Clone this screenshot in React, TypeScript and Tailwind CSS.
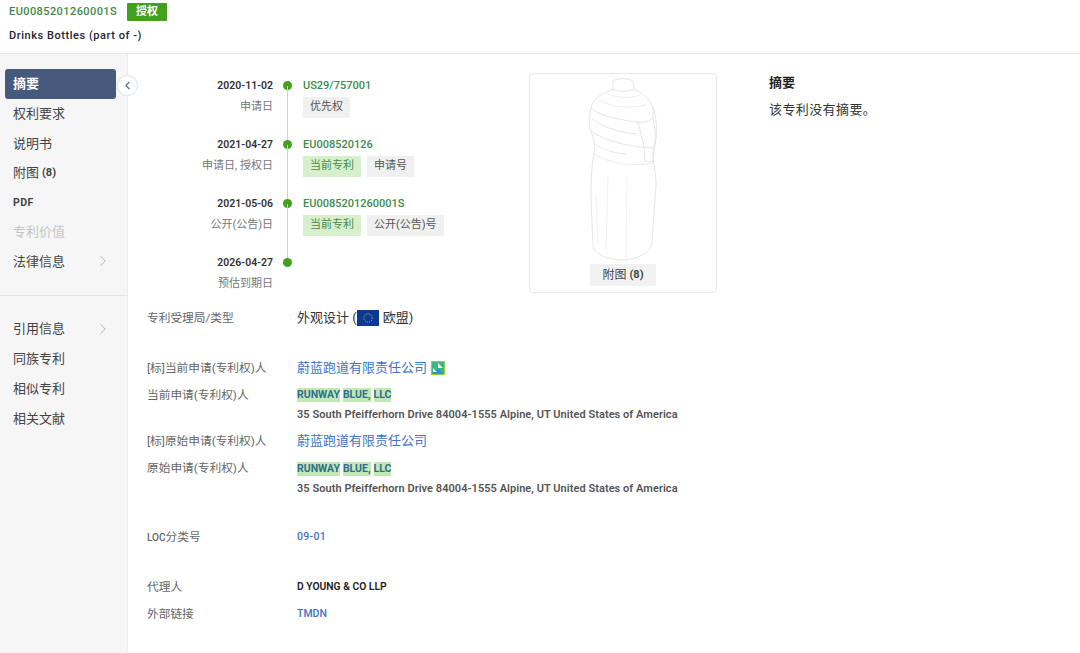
import type { ReactNode } from 'react'
import { ChevronLeft, ChevronRight } from 'lucide-react'

const navTop = ['权利要求', '说明书']
const navBottom = ['同族专利', '相似专利', '相关文献']

const timeline = [
  { date: '2020-11-02', label: '申请日', code: 'US29/757001', tags: [{ text: '优先权', cur: false }] },
  { date: '2021-04-27', label: '申请日, 授权日', code: 'EU008520126', tags: [{ text: '当前专利', cur: true }, { text: '申请号', cur: false }] },
  { date: '2021-05-06', label: '公开(公告)日', code: 'EU0085201260001S', tags: [{ text: '当前专利', cur: true }, { text: '公开(公告)号', cur: false }] },
  { date: '2026-04-27', label: '预估到期日', code: '', tags: [] },
]

function Bottle() {
  return (
    <svg width="90" height="190" viewBox="0 0 90 190" fill="none" stroke="#dedede" strokeWidth="0.8" className="ml-[4px] shrink-0">
      <path d="M33 6c5-3 15-3 20 0l1 8c-6 3-16 3-21 0z" />
      <path d="M34 14C21 18 13 24 11 33c8 7 22 11 47 14 7 1 12-1 15-5l0-9C70 24 62 17 54 14" />
      <path d="M18 24c10 8 30 10 48 6M26 18c8 5 24 6 34 2" stroke="#e8e8e8" />
      <path d="M11 33C9 42 9 50 11 56c3 9 5 13 3 23-3 16-3 31-3 46l2 45c1 8 9 13 27 15 18 0 30-7 32-17l4-58c0-15-4-25-3-35l3-13c1-12 0-22-3-29" />
      <path d="M11 56c14 10 34 15 62 17M12 44c14 10 30 14 46 15" />
      <path d="M14 79c16 10 40 13 59 9M13 68c12 8 22 10 33 11" stroke="#e6e6e6" />
      <path d="M58 47l6 24 1 15 8 1 3-25-3-20" />
      <path d="M28 100l-2 78M47 102l-1 82M16 120l2 48" stroke="#eeeeee" />
    </svg>
  )
}

function EuFlag() {
  return (
    <svg width="22" height="16" viewBox="0 0 22 16" className="mr-[4px]">
      <rect width="22" height="16" fill="#0b3a94" />
      <circle cx="11" cy="8" r="4.2" fill="none" stroke="#c9c44a" strokeWidth="1" strokeDasharray="1 1.2" />
    </svg>
  )
}

function Highlighted() {
  return (
    <div className="mt-px flex gap-[3px] text-[10.5px] font-bold leading-[14px] text-[#2f6f8f]">
      <span className="bg-[#c2e8b6]">RUNWAY</span>
      <span className="bg-[#c2e8b6]">BLUE,</span>
      <span className="bg-[#c2e8b6]">LLC</span>
    </div>
  )
}

function Address() {
  return <div className="mt-[6px] text-[11px] font-semibold leading-[14px] tracking-[0.05px] text-[#555]">35 South Pfeifferhorn Drive 84004-1555 Alpine, UT United States of America</div>
}

function InfoRow({ label, className, children }: { label: ReactNode; className: string; children: ReactNode }) {
  return (
    <div className={`flex ${className}`}>
      <div className="w-[150px] shrink-0 text-[11.7px] leading-[16px] text-[#666]">{label}</div>
      <div>{children}</div>
    </div>
  )
}

export default function App() {
  return (
    <div className="h-[653px] w-[1080px] overflow-hidden bg-white" style={{ fontFamily: '"Roboto", "Noto Sans CJK SC", sans-serif' }}>
      <header className="h-[54px] border-b border-[#e8e8e8] pl-[9px] pt-[3px]">
        <div className="flex items-center gap-[10px]">
          <span className="text-[11px] font-medium tracking-[0.42px] text-[#3d8a4a]">EU0085201260001S</span>
          <span className="flex h-[18px] w-[40px] items-center justify-center rounded-[1px] bg-[#43a01f] text-[11px] font-bold text-white">授权</span>
        </div>
        <div className="mt-[8px] text-[11px] font-medium leading-[14px] tracking-[0.55px] text-[#1f2430]">Drinks Bottles (part of -)</div>
      </header>

      <div className="flex h-[599px]">
        <aside className="relative w-[128px] shrink-0 border-r border-[#ececec] bg-[#f6f6f6] pl-[5px] pr-[11px] pt-[15px] text-[13px] text-[#444]">
          <div className="flex h-[30px] items-center rounded-[3px] bg-[#47597c] pl-[8px] font-bold text-white">摘要</div>
          {navTop.map(n => (
            <div key={n} className="flex h-[29.5px] items-center pl-[8px]">{n}</div>
          ))}
          <div className="flex h-[29.5px] items-center pl-[8px]">附图<span className="ml-[3px] text-[11px] font-bold">(8)</span></div>
          <div className="flex h-[29.5px] items-center pl-[8px] pt-px text-[10.5px] font-bold tracking-[0.5px]">PDF</div>
          <div className="flex h-[29.5px] items-center pl-[8px] text-[#c4c4c4]">专利价值</div>
          <div className="flex h-[29.5px] items-center justify-between pl-[8px] pr-[4px]">法律信息<ChevronRight size={18} strokeWidth={1.1} className="text-[#aaa]" /></div>
          <div className="-ml-[5px] -mr-[11px] mb-[18px] mt-[19px] border-t border-[#e6e6e6]" />
          <div className="flex h-[30px] items-center justify-between pl-[8px] pr-[4px]">引用信息<ChevronRight size={18} strokeWidth={1.1} className="text-[#aaa]" /></div>
          {navBottom.map(n => (
            <div key={n} className="flex h-[30px] items-center pl-[8px]">{n}</div>
          ))}
          <button className="absolute right-[-11px] top-[21px] flex h-[21px] w-[21px] items-center justify-center rounded-full border border-[#d5e2f2] bg-white text-[#4a6a94]">
            <ChevronLeft size={13} strokeWidth={2} />
          </button>
        </aside>

        <main className="min-w-0 flex-1 pl-[19px]">
          <div className="flex pt-[24px]">
            <div className="w-[382px] shrink-0">
              {timeline.map((t, i) => (
                <div key={t.date} className="flex h-[59px]">
                  <div className="w-[126px] shrink-0 text-right">
                    <div className="text-[10.5px] font-semibold leading-[16px] text-[#333]">{t.date}</div>
                    <div className="mt-[5px] text-[11px] leading-[16px] text-[#777]">{t.label}</div>
                  </div>
                  <div className="relative w-[30px] shrink-0">
                    <span className="absolute left-[10px] top-[3px] h-[9px] w-[9px] rounded-full bg-[#43a01f]" />
                    {i < 3 && <span className="absolute left-[14px] top-[8px] h-[59px] w-px bg-[#d0d0d0]" />}
                  </div>
                  <div>
                    <div className="text-[11px] font-medium leading-[16px] text-[#3d8a4a]">{t.code}</div>
                    <div className="mt-[3px] flex gap-[6px]">
                      {t.tags.map(tag => (
                        <span key={tag.text} className={`flex h-[21px] items-center px-[7px] text-[11px] ${tag.cur ? 'bg-[#d6efcc] text-[#4f8a45]' : 'bg-[#f0f0f0] text-[#555]'}`}>{tag.text}</span>
                      ))}
                    </div>
                  </div>
                </div>
              ))}
            </div>

            <div className="-mt-[5px] flex h-[220px] w-[188px] shrink-0 flex-col items-center rounded-[4px] border border-[#e8e8e8] pt-[1px]">
              <Bottle />
              <div className="-mt-[1px] flex h-[22px] w-[66px] items-center justify-center bg-[#f2f2f2] text-[12px] text-[#444]">附图<span className="ml-[3px] text-[11px] font-bold">(8)</span></div>
            </div>

            <div className="-mt-[4px] ml-[52px]">
              <div className="text-[13px] font-bold leading-[18px] text-[#222]">摘要</div>
              <div className="mt-[9px] text-[13px] leading-[18px] tracking-[0.4px] text-[#333]">该专利没有摘要。</div>
            </div>
          </div>

          <InfoRow label="专利受理局/类型" className="-mt-[4px] h-[50px]">
            <div className="flex items-center text-[13px] leading-[16px] text-[#333]">外观设计 (<EuFlag />欧盟)</div>
          </InfoRow>
          <InfoRow label="[标]当前申请(专利权)人" className="h-[27px]">
            <div className="flex items-center gap-[4px] text-[13px] leading-[16px] text-[#3f73c4]">蔚蓝跑道有限责任公司
              <svg width="14" height="14" viewBox="0 0 14 14"><rect width="14" height="14" fill="#8fd14f" /><rect x="1" y="1" width="12" height="12" fill="#3cb878" /><path d="M1 13L7 7l6 6z" fill="#2f8fd0" /><path d="M7 2l5 5H7zM2 7l4 4H2z" fill="#e8f5ee" /></svg>
            </div>
          </InfoRow>
          <InfoRow label="当前申请(专利权)人" className="h-[46px]">
            <Highlighted />
            <Address />
          </InfoRow>
          <InfoRow label="[标]原始申请(专利权)人" className="h-[27px]">
            <div className="text-[13px] leading-[16px] text-[#3f73c4]">蔚蓝跑道有限责任公司</div>
          </InfoRow>
          <InfoRow label="原始申请(专利权)人" className="h-[69px]">
            <div className="pt-px">
              <Highlighted />
              <Address />
            </div>
          </InfoRow>
          <InfoRow label={<><span className="text-[10px] font-medium">LOC</span>分类号</>} className="h-[50px]">
            <div className="text-[10.5px] font-medium leading-[16px] tracking-[0.3px] text-[#3f73c4]">09-01</div>
          </InfoRow>
          <InfoRow label="代理人" className="h-[27px]">
            <div className="text-[10.3px] font-semibold leading-[16px] text-[#222]">D YOUNG &amp; CO LLP</div>
          </InfoRow>
          <InfoRow label="外部链接" className="h-[27px]">
            <div className="text-[10.5px] font-medium leading-[16px] text-[#3f73c4]">TMDN</div>
          </InfoRow>
        </main>
      </div>
    </div>
  )
}
